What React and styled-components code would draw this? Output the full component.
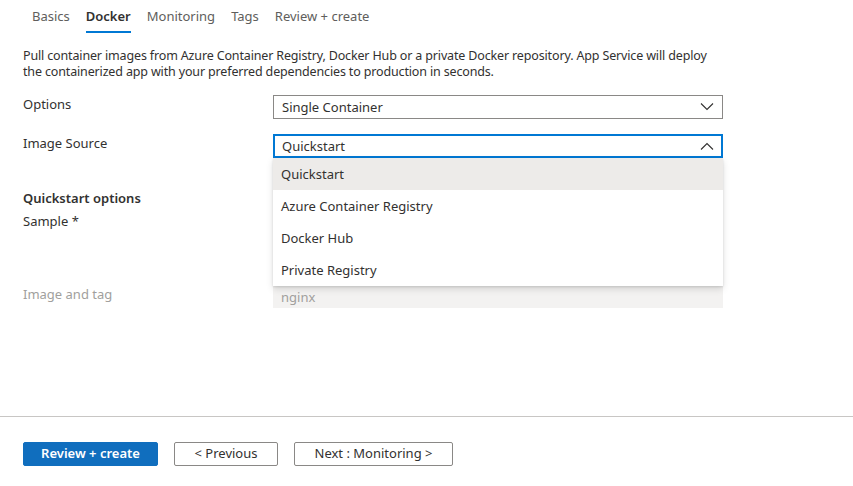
import React from "react";
import styled, { createGlobalStyle } from "styled-components";

const Global = createGlobalStyle`
  html, body { margin: 0; padding: 0; background: #fff; }
  body { font-family: "Noto Sans", "Open Sans", sans-serif; font-size: 13px; color: #323130; }
  * { box-sizing: border-box; }
`;

const Page = styled.div`
  width: 853px;
  height: 486px;
  display: flex;
  flex-direction: column;
  overflow: hidden;
`;

const TabBar = styled.div`
  display: flex;
  gap: 16px;
  padding: 0 0 0 32px;
`;

const Tab = styled.div`
  padding: 6px 0 5px;
  line-height: 20px;
  font-size: 13px;
  color: ${(p) => (p.$active ? "#323130" : "#605e5c")};
  font-weight: ${(p) => (p.$active ? 600 : 400)};
  border-bottom: 2px solid ${(p) => (p.$active ? "#0078d4" : "transparent")};
`;

const Content = styled.div`
  flex: 1;
  padding: 15px 23px 0;
  display: flex;
  flex-direction: column;
`;

const Description = styled.p`
  margin: 0 0 15px;
  line-height: 16px;
  font-size: 12.5px;
  letter-spacing: -0.15px;
  white-space: nowrap;
`;

const Row = styled.div`
  display: grid;
  grid-template-columns: 250px 450px;
  align-items: start;
  margin-bottom: ${(p) => p.$gap ?? 15}px;
  min-height: ${(p) => p.$minH ?? 0}px;
`;

const Label = styled.div`
  line-height: 18px;
  color: ${(p) => (p.$disabled ? "#a19f9d" : "#323130")};
`;

const Heading = styled.div`
  font-weight: 600;
  line-height: 18px;
  margin: 31px 0 5px;
`;

const Field = styled.div`
  position: relative;
`;

const Select = styled.div`
  height: 24px;
  display: flex;
  align-items: center;
  justify-content: space-between;
  padding: 0 ${(p) => (p.$open ? 7 : 8)}px;
  border: ${(p) => (p.$open ? "2px solid #0078d4" : "1px solid #8a8886")};
  background: #fff;
  color: #323130;
  line-height: 18px;
`;

const DisabledInput = styled.div`
  height: 23px;
  display: flex;
  align-items: center;
  padding: 0 8px;
  background: #f3f2f1;
  color: #a19f9d;
`;

const Menu = styled.div`
  position: absolute;
  top: 24px;
  left: 0;
  width: 450px;
  background: #fff;
  box-shadow: 0 3px 7px rgba(0, 0, 0, 0.13), 0 0.6px 2px rgba(0, 0, 0, 0.11);
  z-index: 10;
`;

const MenuItem = styled.div`
  height: 32px;
  display: flex;
  align-items: center;
  padding: 0 8px;
  background: ${(p) => (p.$selected ? "#edebe9" : "#fff")};
  color: #323130;
`;

const Footer = styled.div`
  border-top: 1px solid #c8c6c4;
  height: 70px;
  display: flex;
  align-items: flex-start;
  gap: 16px;
  padding: 25px 23px 0;
`;

const Button = styled.button`
  height: 24px;
  min-width: ${(p) => p.$w}px;
  font-family: inherit;
  font-size: 13px;
  line-height: 18px;
  padding: 0 12px 2px;
  border-radius: 2px;
  cursor: pointer;
  border: 1px solid ${(p) => (p.$primary ? "#106ebe" : "#8a8886")};
  background: ${(p) => (p.$primary ? "#106ebe" : "#fff")};
  color: ${(p) => (p.$primary ? "#fff" : "#323130")};
  font-weight: ${(p) => (p.$primary ? 600 : 400)};
`;

const Chevron = ({ up }) => (
  <svg width="14" height="8" viewBox="0 0 14 8" fill="none">
    <path
      d={up ? "M1 7.5 L7 1.5 L13 7.5" : "M1 0.5 L7 6.5 L13 0.5"}
      stroke="#323130"
      strokeWidth="1.1"
    />
  </svg>
);

export default function App() {
  return (
    <Page>
      <Global />
      <TabBar>
        <Tab>Basics</Tab>
        <Tab $active>Docker</Tab>
        <Tab>Monitoring</Tab>
        <Tab>Tags</Tab>
        <Tab>Review + create</Tab>
      </TabBar>
      <Content>
        <Description>
          Pull container images from Azure Container Registry, Docker Hub or a private Docker
          repository. App Service will deploy
          <br />
          the containerized app with your preferred dependencies to production in seconds.
        </Description>
        <Row>
          <Label>Options</Label>
          <Select>
            <span>Single Container</span>
            <Chevron />
          </Select>
        </Row>
        <Row $gap={0}>
          <Label>Image Source</Label>
          <Field>
            <Select $open>
              <span>Quickstart</span>
              <Chevron up />
            </Select>
            <Menu>
              <MenuItem $selected>Quickstart</MenuItem>
              <MenuItem>Azure Container Registry</MenuItem>
              <MenuItem>Docker Hub</MenuItem>
              <MenuItem>Private Registry</MenuItem>
            </Menu>
          </Field>
        </Row>
        <Heading>Quickstart options</Heading>
        <Row $minH={73} $gap={0}>
          <Label>Sample *</Label>
          <Select>
            <span />
            <Chevron />
          </Select>
        </Row>
        <Row $gap={0}>
          <Label $disabled>Image and tag</Label>
          <DisabledInput>nginx</DisabledInput>
        </Row>
      </Content>
      <Footer>
        <Button $primary $w={135}>Review + create</Button>
        <Button $w={104}>&lt; Previous</Button>
        <Button $w={159}>Next : Monitoring &gt;</Button>
      </Footer>
    </Page>
  );
}
